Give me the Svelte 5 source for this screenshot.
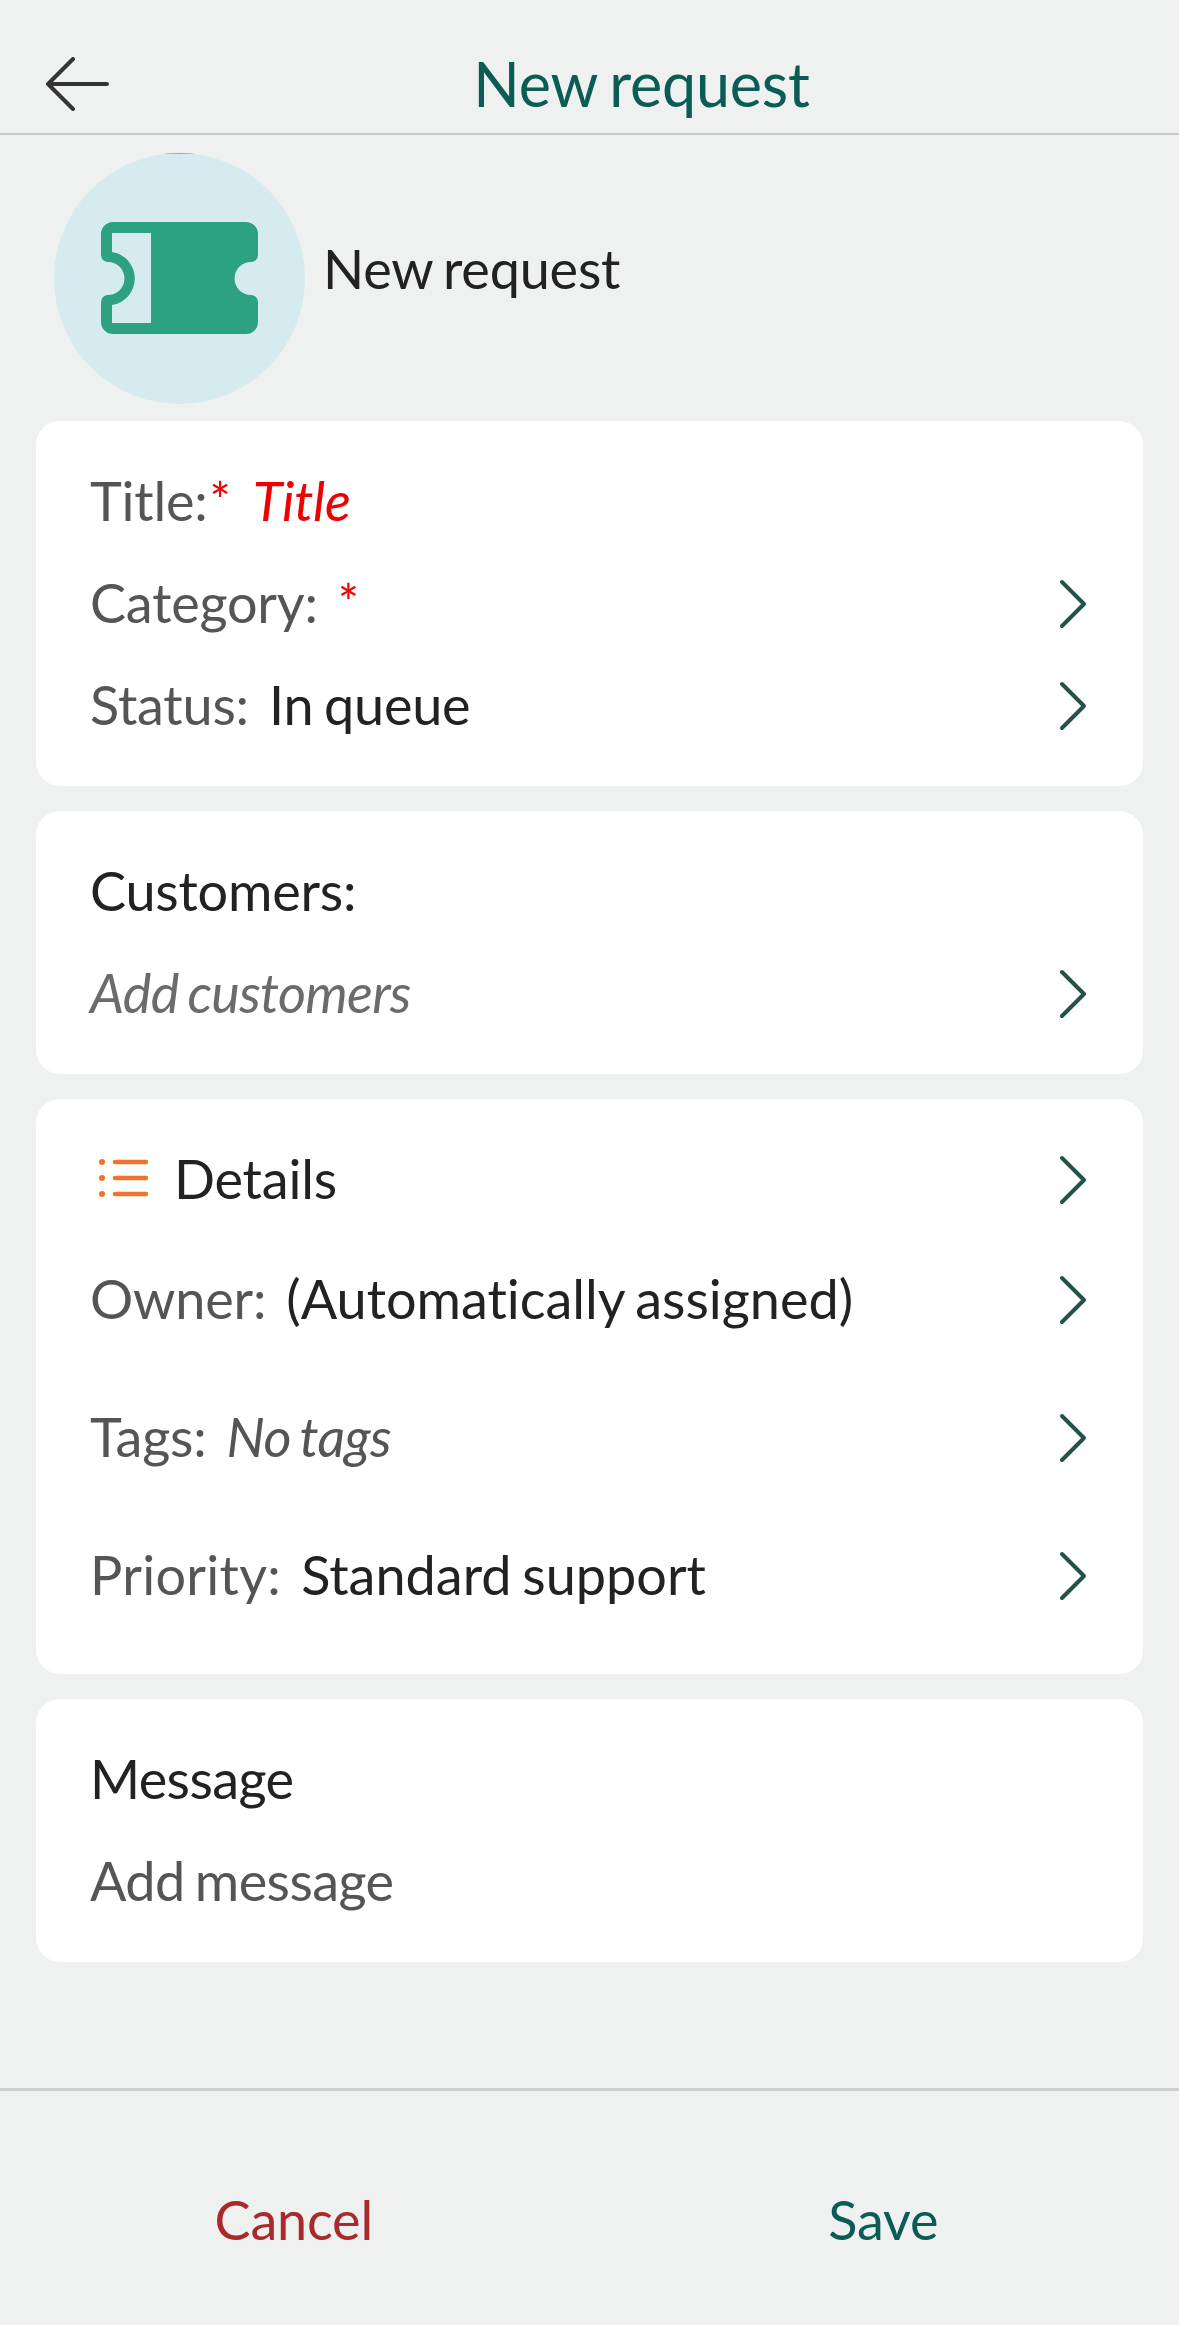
<script>
  const chevron = "M4 3 L26 25 L4 47";
</script>

{#snippet arrow()}
  <svg class="chevron" viewBox="0 0 30 50" aria-hidden="true"><path d={chevron} /></svg>
{/snippet}

<div class="page">
  <header class="topbar">
    <button class="back" aria-label="Back">
      <svg viewBox="0 0 64 54" width="64" height="54" aria-hidden="true">
        <path d="M28 2 L3 27 L28 52 M3 27 H62" />
      </svg>
    </button>
    <h1>New request</h1>
  </header>

  <section class="intro">
    <div class="avatar">
      <svg viewBox="0 0 157 112" width="157" height="112" aria-hidden="true">
        <path
          fill-rule="evenodd"
          d="M12 0 H145 a12 12 0 0 1 12 12 V33 a7 7 0 0 1 -7 7 a16.5 16.5 0 0 0 0 33 a7 7 0 0 1 7 7 V100 a12 12 0 0 1 -12 12 H12 a12 12 0 0 1 -12 -12 V80 a7 7 0 0 1 7 -7 a16.5 16.5 0 0 0 0 -33 a7 7 0 0 1 -7 -7 V12 a12 12 0 0 1 12 -12 Z M11 11 V30 a26.8 26.8 0 0 1 0 53 V101 H50 V11 Z"
        />
      </svg>
    </div>
    <span class="intro-title">New request</span>
  </section>

  <main class="cards">
    <section class="card">
      <div class="row">
        <span class="label">Title:</span><sup class="req">*</sup>
        <em class="title-input">Title</em>
      </div>
      <div class="row">
        <span class="label">Category:</span><sup class="req spaced">*</sup>
        {@render arrow()}
      </div>
      <div class="row">
        <span class="label">Status:</span>
        <span class="value">In queue</span>
        {@render arrow()}
      </div>
    </section>

    <section class="card">
      <div class="row"><span class="value flush">Customers:</span></div>
      <div class="row">
        <em class="hint">Add customers</em>
        {@render arrow()}
      </div>
    </section>

    <section class="card">
      <div class="row">
        <svg class="list-icon" viewBox="0 0 49 38" width="49" height="38" aria-hidden="true">
          <circle cx="3" cy="3" r="3" />
          <circle cx="3" cy="19" r="3" />
          <circle cx="3" cy="35" r="3" />
          <path d="M16 3 H47 M16 19 H47 M16 35 H47" />
        </svg>
        <span class="value flush">Details</span>
        {@render arrow()}
      </div>
      <div class="row tall">
        <span class="label">Owner:</span>
        <span class="value long">(Automatically assigned)</span>
        {@render arrow()}
      </div>
      <div class="row tall">
        <span class="label">Tags:</span>
        <em class="value muted">No tags</em>
        {@render arrow()}
      </div>
      <div class="row tall">
        <span class="label wide">Priority:</span>
        <span class="value long">Standard support</span>
        {@render arrow()}
      </div>
    </section>

    <section class="card">
      <div class="row"><span class="value flush tight">Message</span></div>
      <div class="row"><span class="label tight">Add message</span></div>
    </section>
  </main>

  <footer class="actions">
    <button class="cancel">Cancel</button>
    <button class="save">Save</button>
  </footer>
</div>

<style>
  :global(body) {
    margin: 0;
    background: #eff1f0;
  }
  .page {
    width: 1179px;
    height: 2325px;
    background: #eff1f0;
    font-family: Lato, "Open Sans", sans-serif;
    font-size: 54px;
    font-variant-ligatures: none;
    letter-spacing: -0.2px;
    word-spacing: -3px;
    color: #222;
    display: flex;
    flex-direction: column;
  }
  .topbar {
    height: 135px;
    box-sizing: border-box;
    border-bottom: 2px solid #c9cbcb;
    position: relative;
    display: flex;
    justify-content: center;
    align-items: center;
    padding-top: 34px;
    padding-left: 104px;
  }
  h1 {
    margin: 0;
    font-size: 61px;
    font-weight: 400;
    color: #0a5c55;
  }
  .back {
    position: absolute;
    left: 45px;
    top: 57px;
    padding: 0;
    border: 0;
    background: none;
    line-height: 0;
  }
  .back path {
    fill: none;
    stroke: #333;
    stroke-width: 4;
    stroke-linecap: round;
    stroke-linejoin: round;
  }
  .intro {
    display: flex;
    align-items: center;
    gap: 18px;
    padding: 18px 0 0 54px;
    height: 268px;
    box-sizing: border-box;
  }
  .avatar {
    width: 251px;
    height: 251px;
    border-radius: 50%;
    background: #d6ebf0;
    display: flex;
    align-items: center;
    justify-content: center;
    flex: none;
    position: relative;
    overflow: hidden;
  }
  .avatar::before {
    content: "";
    position: absolute;
    top: 0;
    left: 106px;
    width: 40px;
    height: 1px;
    background: #6fb9a8;
  }
  .avatar path {
    fill: #2da283;
  }
  .intro-title {
    margin-bottom: 20px;
  }
  .cards {
    display: flex;
    flex-direction: column;
    gap: 25px;
    padding: 18px 36px 0;
  }
  .card {
    background: #fff;
    border-radius: 24px;
    padding: 29px 54px 30px 54px;
  }
  .row {
    height: 102px;
    box-sizing: border-box;
    padding-bottom: 2px;
    display: flex;
    align-items: center;
  }
  .row.tall {
    height: 138px;
  }
  .label {
    color: #555;
  }
  .wide {
    letter-spacing: 0.3px;
  }
  .tight {
    letter-spacing: -0.6px;
  }
  .value {
    margin-left: 20px;
  }
  .value.long {
    letter-spacing: 0;
  }
  .value.flush {
    margin-left: 0;
  }
  .value.muted {
    color: #555;
    letter-spacing: -0.6px;
  }
  .list-icon {
    margin: 0 26px 0 9px;
    flex: none;
  }
  .list-icon circle {
    fill: #f0722e;
  }
  .list-icon path {
    fill: none;
    stroke: #f0722e;
    stroke-width: 4.5;
    stroke-linecap: round;
  }
  .req {
    color: #f00000;
    font-size: 50px;
    line-height: 1;
    align-self: flex-start;
    margin: 25px 0 0 2px;
  }
  .req.spaced {
    margin-left: 20px;
  }
  .title-input {
    color: #f00000;
    margin-left: 22px;
  }
  .hint {
    color: #6b6b6b;
    letter-spacing: -0.7px;
  }
  .chevron {
    width: 30px;
    height: 50px;
    margin-left: auto;
    flex: none;
    position: relative;
    top: 2px;
    left: -1px;
  }
  .chevron path {
    fill: none;
    stroke: #22524a;
    stroke-width: 4;
    stroke-linecap: round;
    stroke-linejoin: round;
  }
  .actions {
    margin-top: auto;
    height: 237px;
    box-sizing: border-box;
    border-top: 3px solid #cdd0d0;
    display: grid;
    grid-template-columns: 1fr 1fr;
    padding: 22px 0 0;
  }
  .actions button {
    border: 0;
    background: none;
    font: inherit;
    font-size: 54px;
    letter-spacing: inherit;
  }
  .cancel {
    color: #a82a2a;
    padding-left: 4px;
  }
  .save {
    color: #0a5c55;
    padding-right: 8px;
  }
</style>
